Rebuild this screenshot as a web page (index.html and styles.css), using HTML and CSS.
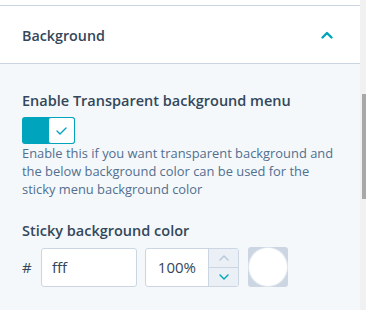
FILE: index.html
```html
<!DOCTYPE html>
<html lang="en">
<head>
  <meta charset="UTF-8" />
  <title>Background settings</title>
  <link rel="stylesheet" href="styles.css">
</head>
<body>
  <div class="frame">
    <div class="panel">
      <div class="top-gap"></div>
      <div class="section-head">
        <span class="section-title">Background</span>
        <svg class="chevron" width="12" height="8" viewBox="0 0 12 8">
          <path d="M1.5 6.5 L6 2 L10.5 6.5" fill="none" stroke="#00a4bd" stroke-width="2.4" stroke-linecap="round" stroke-linejoin="round"/>
        </svg>
      </div>

      <div class="section-body">
        <div class="field-label">Enable Transparent background menu</div>
        <div class="toggle">
          <div class="toggle-knob">
            <svg width="11" height="8" viewBox="0 0 11 8">
              <path d="M1 4 L4 7 L10 1" fill="none" stroke="#00a4bd" stroke-width="1.4" stroke-linecap="round" stroke-linejoin="round"/>
            </svg>
          </div>
        </div>
        <p class="help">Enable this if you want transparent background and the below background color can be used for the sticky menu background color</p>

        <div class="field-label sticky-label">Sticky background color</div>
        <div class="color-row">
          <span class="hash">#</span>
          <div class="input hex">fff</div>
          <div class="input opacity">
            <span class="opacity-value">100%</span>
            <div class="stepper">
              <div class="step">
                <svg width="10" height="6" viewBox="0 0 10 6"><path d="M1 5 L5 1 L9 5" fill="none" stroke="#b9c7d6" stroke-width="1.4" stroke-linecap="round" stroke-linejoin="round"/></svg>
              </div>
              <div class="step step-down">
                <svg width="10" height="6" viewBox="0 0 10 6"><path d="M1 1 L5 5 L9 1" fill="none" stroke="#00a4bd" stroke-width="1.4" stroke-linecap="round" stroke-linejoin="round"/></svg>
              </div>
            </div>
          </div>
          <div class="swatch"><div class="swatch-circle"></div></div>
        </div>
      </div>
    </div>
    <div class="scrollbar"><div class="thumb"></div></div>
  </div>
</body>
</html>
```

FILE: styles.css
```css
body {
  margin: 0;
  font-family: "Open Sans", "Noto Sans", sans-serif;
  color: #33475b;
  background: #f5f8fa;
}

.frame {
  display: flex;
  height: 310px;
  overflow: hidden;
}

.panel {
  flex: 1;
  background: #f5f8fa;
}

.top-gap {
  height: 5px;
  background: #fff;
  border-bottom: 1px solid #cbd6e2;
}

.section-head {
  height: 57px;
  background: #fff;
  border-bottom: 1px solid #cbd6e2;
  display: flex;
  align-items: center;
  justify-content: space-between;
  padding: 0 27px 0 22px;
}

.section-title {
  font-size: 14.3px;
  font-weight: 600;
  padding-top: 1px;
}

.chevron {
  margin-top: 1px;
}

.section-body {
  padding: 27px 22px 0 22px;
}

.field-label {
  font-size: 14.5px;
  font-weight: 600;
  line-height: 20px;
}

.toggle {
  margin-top: 6px;
  width: 53px;
  height: 27px;
  background: #00a4bd;
  border-radius: 3px;
  display: flex;
  justify-content: flex-end;
}

.toggle-knob {
  width: 25px;
  height: 25px;
  background: #fff;
  border: 1px solid #00a4bd;
  border-radius: 3px;
  display: flex;
  align-items: center;
  justify-content: center;
}

.help {
  margin: 0;
  font-size: 12.9px;
  line-height: 18px;
  color: #516f90;
}

.sticky-label {
  margin-top: 23px;
}

.color-row {
  margin-top: 6px;
  display: flex;
  align-items: center;
}

.hash {
  width: 19px;
  font-size: 15px;
  color: #33475b;
}

.input {
  height: 37px;
  background: #fff;
  border: 1px solid #cbd6e2;
  border-radius: 3px;
  display: flex;
  align-items: center;
  font-size: 15px;
}

.hex {
  width: 84px;
  padding-left: 10px;
  margin-right: 8px;
}

.opacity {
  width: 92px;
  margin-right: 9px;
  overflow: hidden;
}

.opacity-value {
  flex: 1;
  text-align: right;
  padding-right: 12px;
}

.stepper {
  width: 29px;
  height: 100%;
  background: #eaf0f6;
  border-left: 1px solid #cbd6e2;
  display: flex;
  flex-direction: column;
}

.step {
  flex: 1;
  display: flex;
  align-items: center;
  justify-content: center;
}

.step-down {
  border-top: 1px solid #cbd6e2;
}

.swatch {
  width: 40px;
  height: 40px;
  background: #cbd6e2;
  border-radius: 3px;
  display: flex;
  align-items: center;
  justify-content: center;
}

.swatch-circle {
  width: 38px;
  height: 38px;
  border-radius: 50%;
  background: #fff;
  box-shadow: 0 0 0 1px #dfe6ee;
}

.scrollbar {
  width: 6px;
  background: #f1f1f1;
  padding-top: 94px;
}

.thumb {
  margin-left: 2px;
  width: 4px;
  height: 105px;
  background: #a8a8a8;
}
```
